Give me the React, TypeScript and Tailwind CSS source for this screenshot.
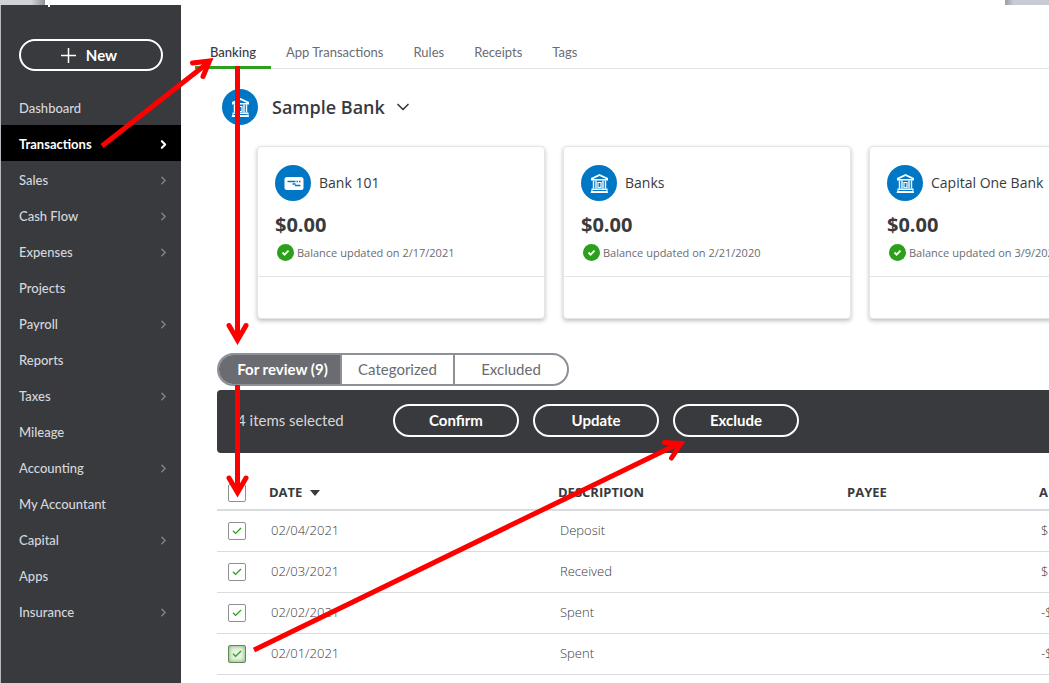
import { useState } from "react";
import { ChevronDown, ChevronRight } from "lucide-react";
import clsx from "clsx";

const navItems = [
  { label: "Dashboard", expandable: false },
  { label: "Transactions", expandable: true, active: true },
  { label: "Sales", expandable: true },
  { label: "Cash Flow", expandable: true },
  { label: "Expenses", expandable: true },
  { label: "Projects", expandable: false },
  { label: "Payroll", expandable: true },
  { label: "Reports", expandable: false },
  { label: "Taxes", expandable: true },
  { label: "Mileage", expandable: false },
  { label: "Accounting", expandable: true },
  { label: "My Accountant", expandable: false },
  { label: "Capital", expandable: true },
  { label: "Apps", expandable: false },
  { label: "Insurance", expandable: true },
];

const tabs = ["Banking", "App Transactions", "Rules", "Receipts", "Tags"];

const accounts = [
  { name: "Bank 101", balance: "$0.00", updated: "2/17/2021", card: true },
  { name: "Banks", balance: "$0.00", updated: "2/21/2020", card: false },
  { name: "Capital One Bank", balance: "$0.00", updated: "3/9/202", card: false },
];

const filters = ["For review (9)", "Categorized", "Excluded"];

const rows = [
  { date: "02/04/2021", description: "Deposit", amount: "$" },
  { date: "02/03/2021", description: "Received", amount: "$" },
  { date: "02/02/2021", description: "Spent", amount: "-$" },
  { date: "02/01/2021", description: "Spent", amount: "-$", focused: true },
];

const BankIcon = () => (
  <svg viewBox="0 0 36 36" className="size-9 shrink-0" aria-hidden="true">
    <circle cx="18" cy="18" r="18" fill="#0077c5" />
    <path d="M10 15.500v-2.500L18.500 9l8.500 4v2.500z" fill="#fff" />
    <path d="M12 14l6.500-3 6.500 3z" fill="#0077c5" />
    <path d="M12.500 15.500v8M15 15.500v8M22 15.500v8M24.500 15.500v8" stroke="#fff" strokeWidth="1.400" />
    <path d="M17 22.500v-5h3v5z" fill="none" stroke="#fff" strokeWidth="1.200" />
    <path d="M10.500 23.500h16v2l.500 2.500h-17.500l1-2.500z" fill="#fff" />
    <path d="M11.500 25.500h14" stroke="#0077c5" strokeWidth="1" />
  </svg>
);

const CardIcon = () => (
  <svg viewBox="0 0 36 36" className="size-9 shrink-0" aria-hidden="true">
    <circle cx="18" cy="18" r="18" fill="#0077c5" />
    <rect x="9.500" y="12" width="19" height="13" rx="2.500" fill="#fff" />
    <path d="M12.500 16.500h8M21.500 16.500h1.500M24 16.500h1.500M17.500 19h3M20 20.500h5.500" stroke="#0077c5" strokeWidth="1.300" />
  </svg>
);

const Sidebar = () => (
  <aside className="w-[180px] shrink-0 bg-[#393a3d] font-['Lato',sans-serif]">
    <div className="px-[18px] pt-[34px] pb-[18px]">
      <button className="flex h-8 w-full items-center justify-center gap-2.5 rounded-full border-2 border-white pr-1 text-[15px] font-bold text-white">
        <svg viewBox="0 0 15 15" className="size-[15px]" aria-hidden="true">
          <path d="M7.500 0v15M0 7.500h15" stroke="#fff" strokeWidth="1.500" />
        </svg>
        New
      </button>
    </div>
    <nav>
      {navItems.map((item) => (
        <a
          key={item.label}
          href="#"
          className={clsx(
            "flex h-9 items-center justify-between pt-[3px] pr-[11px] pl-[18px] text-[13px]",
            item.active ? "bg-black font-bold text-white" : "font-medium text-[#d4d7dc]",
          )}
        >
          {item.label}
          {item.expandable && (
            <ChevronRight
              size={13}
              strokeWidth={item.active ? 4 : 3}
              className={item.active ? "text-white" : "text-[#7d8087]"}
            />
          )}
        </a>
      ))}
    </nav>
  </aside>
);

const AccountCard = ({ account }: { account: (typeof accounts)[number] }) => (
  <article className="h-[173px] w-72 shrink-0 rounded-sm border border-[#e3e5e8] bg-white shadow-[0_2px_4px_rgba(0,0,0,0.25)]">
    <div className="h-[130px] border-b border-[#e3e5e8] pt-[18px] pl-[17px]">
      <div className="flex items-center gap-2 text-sm whitespace-nowrap">
        {account.card ? <CardIcon /> : <BankIcon />}
        {account.name}
      </div>
      <p className="mt-3 text-xl leading-6 font-bold">{account.balance}</p>
      <p className="mt-[7px] flex items-center gap-[3px] pl-0.5 text-[11px] leading-4 whitespace-nowrap text-[#6b6c72]">
        <svg viewBox="0 0 17 17" className="size-[17px] shrink-0" aria-hidden="true">
          <circle cx="8.500" cy="8.500" r="8.500" fill="#2ca01c" />
          <path d="M5.500 8.500l2.100 2.100 3.900-4" fill="none" stroke="#fff" strokeWidth="1.800" />
        </svg>
        Balance updated on {account.updated}
      </p>
    </div>
  </article>
);

type CheckBoxProps = { label: string; initial?: boolean; focused?: boolean };

const CheckBox = ({ label, initial = false, focused = false }: CheckBoxProps) => {
  const [checked, setChecked] = useState(initial);

  return (
    <label className="grid size-[18px] place-items-center">
      <input
        type="checkbox"
        aria-label={label}
        checked={checked}
        onChange={() => setChecked(!checked)}
        className={clsx(
          "col-start-1 row-start-1 size-[18px] appearance-none rounded-[2px] border",
          focused
            ? "border-[#5f8c55] bg-[#e6f4e1] shadow-[inset_0_0_4px_#6fa563]"
            : "border-[#8d9096] bg-white",
        )}
      />
      {checked && (
        <svg viewBox="0 0 10 8" className="pointer-events-none col-start-1 row-start-1 h-2 w-2.5" aria-hidden="true">
          <path d="M1 3.800l2.600 2.600L9 1" fill="none" stroke="#2ca01c" strokeWidth="1.300" />
        </svg>
      )}
    </label>
  );
};

const TransactionTable = () => (
  <div className="overflow-hidden">
    <table className="w-full table-fixed border-collapse text-left">
      <colgroup>
        <col className="w-[52px]" />
        <col />
        <col />
        <col className="w-48" />
        <col className="w-2.5" />
      </colgroup>
      <thead>
        <tr className="h-[57px] border-b-2 border-[#d9dbde] text-[13px] font-bold">
          <th className="pt-6 pl-[11px]">
            <CheckBox label="Select all" />
          </th>
          <th className="pt-6">
            <span className="flex items-center gap-2">
              DATE
              <svg viewBox="0 0 10 6" className="h-1.5 w-2.5" aria-hidden="true">
                <path d="M0 0h10L5 6z" fill="#393a3d" />
              </svg>
            </span>
          </th>
          <th className="pt-6">DESCRIPTION</th>
          <th className="pt-6">PAYEE</th>
          <th className="pt-6">A</th>
        </tr>
      </thead>
      <tbody>
        {rows.map((row) => (
          <tr key={row.date} className="h-[41px] border-b border-[#d9dbde] text-[13px] font-light">
            <td className="pl-[11px]">
              <CheckBox label={`Select ${row.date}`} initial focused={row.focused} />
            </td>
            <td className="pl-0.5">{row.date}</td>
            <td className="pl-0.5">{row.description}</td>
            <td />
            <td className="pl-0.5 whitespace-nowrap">{row.amount}</td>
          </tr>
        ))}
      </tbody>
    </table>
  </div>
);

// Red walkthrough arrows drawn over the page
const Arrows = () => (
  <svg
    width="1049"
    height="683"
    className="pointer-events-none absolute top-0 left-0"
    fill="none"
    stroke="#fe0000"
    strokeWidth="5"
    aria-hidden="true"
  >
    <path d="M102 146L209 62M237.500 66V340M237.500 385V492M254 650L680 443" />
    <g strokeLinecap="round" strokeLinejoin="miter">
      <path d="M192.500 63L209.500 61L203 76.500" />
      <path d="M229 325.500L237.500 340L246 325.500" />
      <path d="M229 478L237.500 492.500L246 478" />
      <path d="M664.500 442.500L681 443.500L671.500 458" />
    </g>
  </svg>
);

const App = () => {
  return (
    <div className="relative flex min-h-screen flex-col overflow-hidden bg-white font-['Open_Sans',sans-serif] text-[#393a3d]">
      <div className="flex h-[5px] justify-between">
        <div className="w-[45px] bg-linear-to-r from-[#d0d2d8] from-70% to-[#8f9094]" />
        <div className="w-11 bg-linear-to-r from-[#9b9da3] to-[#c8cbd3] to-20%" />
      </div>

      <div className="relative flex flex-1 border-l border-[#b5b8bf]">
        <span className="absolute top-0 left-[47px] h-0.5 w-0.5 bg-white" />
        <Sidebar />

        <main className="min-w-0 flex-1">
          <div className="pl-[14px]">
            <nav className="flex h-16 items-end gap-[30px] border-b border-[#e3e5e8] font-['Lato',sans-serif] text-[13px] text-[#6b6c72]">
              {tabs.map((tab, idx) => (
                <a
                  key={tab}
                  href="#"
                  className={clsx(
                    "-mb-px border-b-3 pb-1 leading-5",
                    idx === 0
                      ? "-mr-[15px] border-[#2ca01c] px-[15px] font-medium text-[#393a3d]"
                      : "border-transparent",
                  )}
                >
                  {tab}
                </a>
              ))}
            </nav>
          </div>

          <div className="pl-9">
            <button className="mt-5 ml-[5px] flex items-center gap-3.5 text-lg font-semibold">
              <BankIcon />
              <span className="flex items-center gap-2">
                Sample Bank
                <ChevronDown size={20} strokeWidth={2} />
              </span>
            </button>

            <div className="flex gap-[18px] overflow-hidden pt-[21px] pb-2 pl-10">
              {accounts.map((account) => (
                <AccountCard key={account.name} account={account} />
              ))}
            </div>

            <div className="mt-[26px] inline-flex h-[33px] overflow-hidden rounded-full border-2 border-[#8d9096] align-top font-['Lato',sans-serif] text-[15px] text-[#6b6c72]">
              {filters.map((filter, idx) => (
                <button
                  key={filter}
                  className={
                    idx === 0
                      ? "w-[121px] bg-[#6b6c72] pl-1.5 font-bold text-white"
                      : "w-[113px] border-l-2 border-[#8d9096] last:w-[114px]"
                  }
                >
                  {filter}
                </button>
              ))}
            </div>

            <div className="mt-1 flex h-[63px] items-center rounded-l bg-[#393a3d] pb-0.5 pl-5 font-['Lato',sans-serif] text-[15px]">
              <span className="w-[156px] text-[#d4d7dc]">4 items selected</span>
              <div className="flex gap-[14px]">
                {["Confirm", "Update", "Exclude"].map((action) => (
                  <button
                    key={action}
                    className="h-[33px] w-[126px] rounded-full border-2 border-white font-bold text-white"
                  >
                    {action}
                  </button>
                ))}
              </div>
            </div>

            <TransactionTable />
          </div>
        </main>
      </div>

      <Arrows />
    </div>
  );
};

export default App;
